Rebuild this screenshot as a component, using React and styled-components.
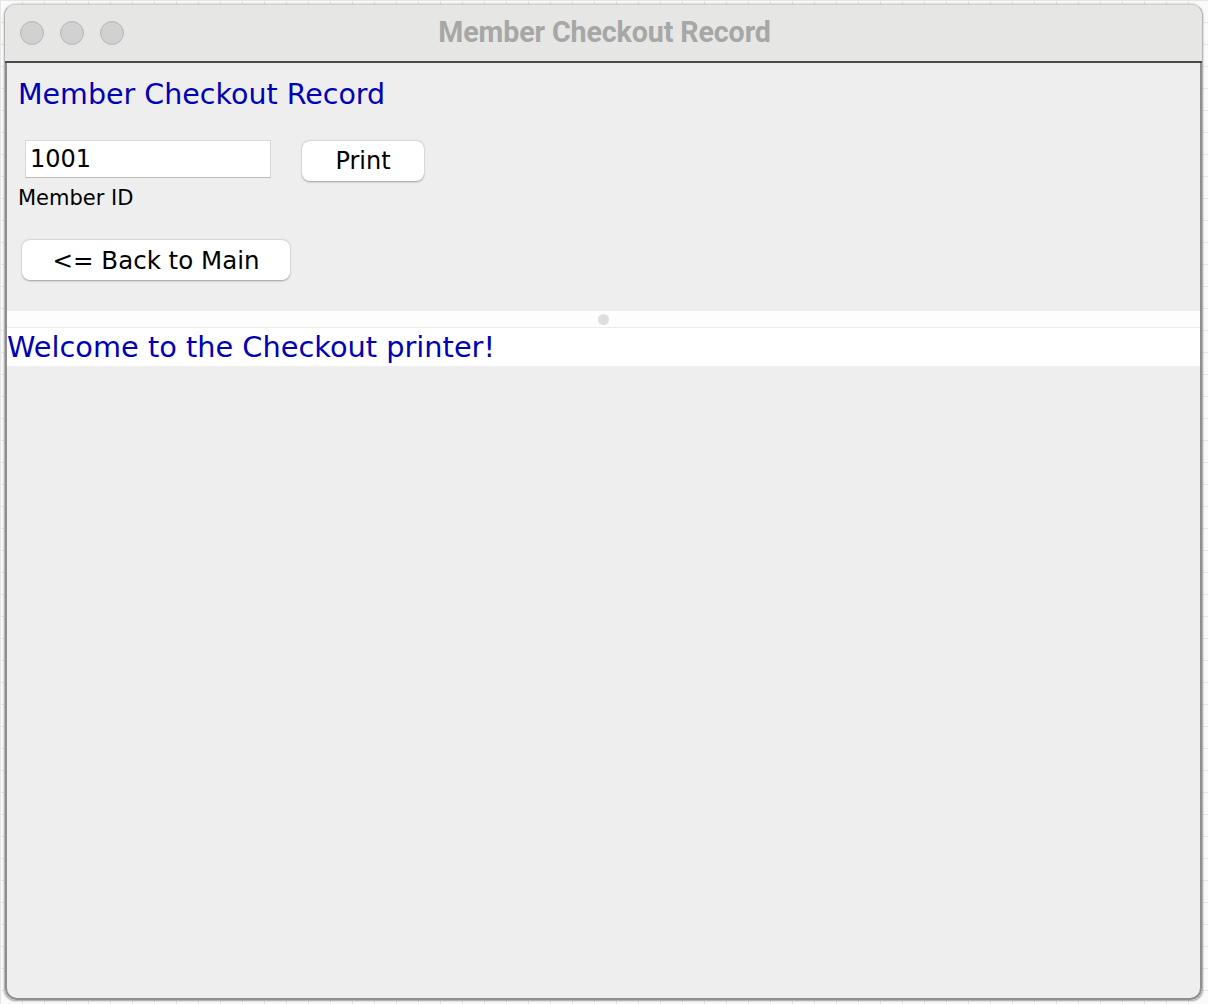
import React from "react";
import styled, { createGlobalStyle } from "styled-components";

const Global = createGlobalStyle`
  html, body { margin: 0; padding: 0; }
  body {
    width: 1208px; height: 1004px; overflow: hidden;
    background-color: #fafafa;
    background-image:
      linear-gradient(#e6e6e6 1px, transparent 1px),
      linear-gradient(90deg, #e6e6e6 1px, transparent 1px);
    background-size: 22px 22px;
    font-family: "DejaVu Sans", "Liberation Sans", sans-serif;
  }
`;

const Screen = styled.div`
  width: 1208px;
  height: 1004px;
  padding: 4px 5px 3px 4px;
  box-sizing: border-box;
  display: flex;
`;

const Window = styled.div`
  flex: 1;
  display: flex;
  flex-direction: column;
  border-radius: 12px;
  border: 1px solid #b4b4b4;
  border-top-color: #cfcfcf;
  overflow: hidden;
  box-shadow: 0 0 2px rgba(0,0,0,0.35);
  background: #eeeeee;
`;

const TitleBar = styled.div`
  height: 55px;
  flex: none;
  position: relative;
  background: #e6e6e4;
  border-bottom: 2px solid #4a4a4a;
  display: flex;
  align-items: center;
  padding-left: 15px;
  padding-bottom: 1px;
  gap: 16px;
`;

const Light = styled.span`
  width: 24px;
  height: 24px;
  border-radius: 50%;
  background: #d1d1d1;
  border: 1px solid #b6b6b6;
  box-sizing: border-box;
`;

const Title = styled.div`
  position: absolute;
  left: 0; right: 0; top: 0; bottom: 2px;
  display: flex;
  align-items: center;
  justify-content: center;
  font-family: Roboto, "Liberation Sans", sans-serif;
  font-weight: 700;
  font-size: 28.6px;
  letter-spacing: -0.1px;
  color: #a7a7a7;
  padding-left: 2px;
`;

const Body = styled.div`
  flex: 1;
  display: flex;
  flex-direction: column;
  border-left: 2px solid #8e8e8e;
  border-right: 2px solid #8e8e8e;
  border-bottom: 2px solid #8e8e8e;
  border-radius: 0 0 12px 12px;
  background: #eeeeee;
`;

const Form = styled.div`
  height: 248px;
  padding: 12px 0 0 11px;
  box-sizing: border-box;
  display: flex;
  flex-direction: column;
  align-items: flex-start;
`;

const Heading = styled.div`
  font-size: 28.5px;
  color: #0000b4;
  line-height: 40px;
`;

const Row = styled.div`
  margin-top: 25px;
  display: flex;
  align-items: flex-start;
  gap: 31px;
  padding-left: 7px;
`;

const Field = styled.div`
  width: 246px;
  height: 38px;
  box-sizing: border-box;
  background: #fff;
  border: 1px solid #d8d8d8;
  border-bottom-color: #bdbdbd;
  font-size: 24px;
  line-height: 36px;
  padding-left: 4px;
  color: #000;
`;

const Button = styled.div`
  width: ${p => p.w}px;
  height: 40px;
  box-sizing: border-box;
  background: #fff;
  border-radius: 8px;
  box-shadow: 0 0.5px 2px rgba(0,0,0,0.35);
  display: flex;
  align-items: center;
  justify-content: center;
  font-size: ${p => p.fs || 24}px;
  color: #000;
  margin-top: 1px;
`;

const Label = styled.div`
  font-size: 21px;
  color: #000;
  margin-top: 4px;
  line-height: 26px;
`;

const BackWrap = styled.div`
  margin-top: 28px;
  padding-left: 4px;
`;

const Output = styled.div`
  background: #fff;
  display: flex;
  flex-direction: column;
`;

const Divider = styled.div`
  height: 16px;
  border-bottom: 1px solid #ececec;
  background: #fdfdfd;
  display: flex;
  align-items: center;
  justify-content: center;
`;

const Dot = styled.span`
  width: 11px;
  height: 11px;
  border-radius: 50%;
  background: #dedede;
`;

const Welcome = styled.div`
  font-size: 28.8px;
  color: #0000b4;
  line-height: 38px;
`;

export default function App() {
  return (
    <>
      <Global />
      <Screen>
        <Window>
          <TitleBar>
            <Light />
            <Light />
            <Light />
            <Title>Member Checkout Record</Title>
          </TitleBar>
          <Body>
            <Form>
              <Heading>Member Checkout Record</Heading>
              <Row>
                <Field>1001</Field>
                <Button w={122}>Print</Button>
              </Row>
              <Label>Member ID</Label>
              <BackWrap>
                <Button w={268} fs={24.5}>&lt;= Back to Main</Button>
              </BackWrap>
            </Form>
            <Output>
              <Divider><Dot /></Divider>
              <Welcome>Welcome to the Checkout printer!</Welcome>
            </Output>
          </Body>
        </Window>
      </Screen>
    </>
  );
}
